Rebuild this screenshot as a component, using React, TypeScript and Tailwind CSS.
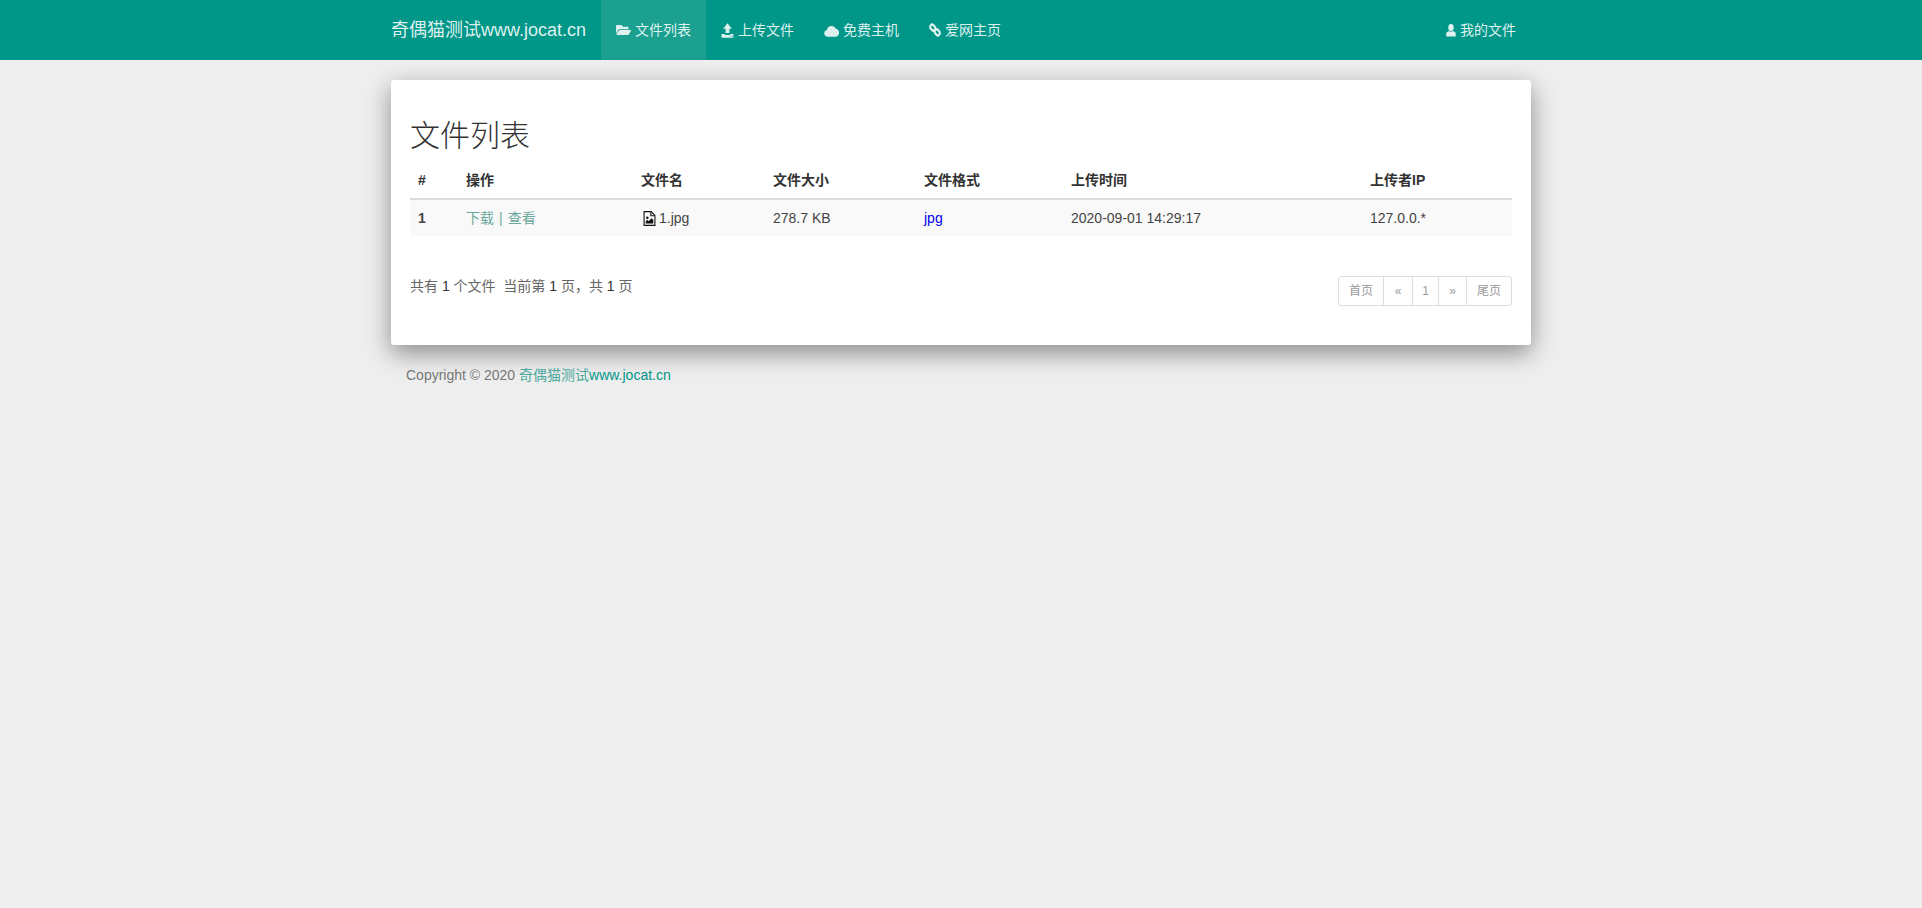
import { FaFolderOpen } from "react-icons/fa";

const font = { fontFamily: '"Liberation Sans","Noto Sans CJK SC",sans-serif' };

function UploadIcon() {
  return (
    <svg viewBox="0 0 24 24" fill="currentColor" className="h-[15px] w-[13px]" preserveAspectRatio="none">
      <path d="M12 0.5 L20 9 H15.5 V16 H8.5 V9 H4 Z" />
      <path fillRule="evenodd" d="M1 17.5 H7 V19 H17 V17.5 H23 V23.5 H1 Z M17.5 20.5 h1.5 v1.5 h-1.5 Z M20.5 20.5 h1.5 v1.5 h-1.5 Z" />
    </svg>
  );
}

function CloudIcon() {
  return (
    <svg viewBox="0 0 24 20" fill="currentColor" className="h-[13px] w-[15px]" preserveAspectRatio="none">
      <path d="M5.5 19.5a5.2 5.2 0 0 1-.9-10.3A7.6 7.6 0 0 1 19 7.4a6.1 6.1 0 0 1-.6 12.1z" />
    </svg>
  );
}

function LinkIcon() {
  return (
    <svg viewBox="0 0 24 24" fill="none" stroke="currentColor" strokeWidth="4" className="h-[14px] w-[12px]" preserveAspectRatio="none">
      <rect x="2" y="4" width="11" height="8" rx="4" transform="rotate(45 7.5 8)" />
      <rect x="11" y="12" width="11" height="8" rx="4" transform="rotate(45 16.5 16)" />
    </svg>
  );
}

function UserIcon() {
  return (
    <svg viewBox="0 0 20 24" fill="currentColor" className="h-[13px] w-[10px]" preserveAspectRatio="none">
      <ellipse cx="10" cy="6.5" rx="5.5" ry="6.5" />
      <path d="M6.5 13 C8 15 12 15 13.5 13 C17 14 19.5 15.5 19.5 18 V23 H0.5 V18 C0.5 15.5 3 14 6.5 13 Z" />
    </svg>
  );
}

function FileImageIcon() {
  return (
    <svg viewBox="0 0 24 28" className="h-[15px] w-[13px] text-[#111111]" preserveAspectRatio="none">
      <path d="M2 1.2 H15 L22 8.2 V26.8 H2 Z" fill="none" stroke="currentColor" strokeWidth="2" />
      <path d="M14.5 1.5 V8.7 H21.5" fill="none" stroke="currentColor" strokeWidth="2" />
      <circle cx="8" cy="12.5" r="2.4" fill="currentColor" />
      <path d="M5 23.5 V19.5 L8 16.5 L10.5 19 L15.5 13.5 L19 17 V23.5 Z" fill="currentColor" />
    </svg>
  );
}

function NavItem({ icon, label, active }: { icon: React.ReactNode; label: string; active?: boolean }) {
  return (
    <a className={`flex h-[60px] items-center gap-[4px] px-[15px] text-[14px] text-[#dff1ef] ${active ? "bg-[#1ba08f]" : ""}`}>
      {icon}
      <span>{label}</span>
    </a>
  );
}

const cols = [
  ["#", "w-[48px]"],
  ["操作", "w-[175px]"],
  ["文件名", "w-[132px]"],
  ["文件大小", "w-[151px]"],
  ["文件格式", "w-[147px]"],
  ["上传时间", "w-[299px]"],
  ["上传者IP", "w-[150px]"],
];

const pages = [
  ["首页", "w-[46px] rounded-l-[3px]"],
  ["«", "w-[30px] -ml-px"],
  ["1", "w-[27px] -ml-px"],
  ["»", "w-[29px] -ml-px"],
  ["尾页", "w-[46px] -ml-px rounded-r-[3px]"],
];

export default function App() {
  return (
    <div className="min-h-[908px] bg-[#eeeeee] text-[14px] leading-[20px] text-[#333333]" style={font}>
      <nav className="h-[60px] bg-[#009688]">
        <div className="mx-auto flex w-[1170px]">
          <a className="flex h-[60px] items-center px-[15px] text-[18px] text-[#dff1ef]">奇偶猫测试www.jocat.cn</a>
          <NavItem active icon={<FaFolderOpen className="h-[14px] w-[15px]" />} label="文件列表" />
          <NavItem icon={<UploadIcon />} label="上传文件" />
          <NavItem icon={<CloudIcon />} label="免费主机" />
          <NavItem icon={<LinkIcon />} label="爱网主页" />
          <div className="ml-auto mr-[15px]">
            <NavItem icon={<UserIcon />} label="我的文件" />
          </div>
        </div>
      </nav>

      <main className="mx-auto w-[1170px] px-[15px] pt-[20px]">
        <section className="rounded-[3px] bg-white p-[19px] shadow-[0_8px_25px_rgba(0,0,0,0.42)]">
          <h2 className="mt-[20px] mb-[10px] text-[30px] font-light leading-[33px] text-[#333333]">文件列表</h2>
          <table className="w-[1102px] table-fixed border-collapse">
            <thead>
              <tr className="border-b-2 border-[#dddddd]">
                {cols.map(([c, w]) => (
                  <th key={c} className={`${w} p-[8px] text-left text-[14px] font-bold text-[#333333]`}>{c}</th>
                ))}
              </tr>
            </thead>
            <tbody>
              <tr className="bg-[#f9f9f9] text-[#444444]">
                <td className="p-[8px] font-bold">1</td>
                <td className="p-[8px] text-[#6aa79b]">
                  <a>下载</a>
                  <span className="mx-[5px]">|</span>
                  <a>查看</a>
                </td>
                <td className="p-[8px]">
                  <span className="flex items-center gap-[3px] pl-[2px]">
                    <FileImageIcon />
                    <span>1.jpg</span>
                  </span>
                </td>
                <td className="p-[8px]">278.7 KB</td>
                <td className="p-[8px] text-[#0000ee]"><a>jpg</a></td>
                <td className="p-[8px]">2020-09-01 14:29:17</td>
                <td className="p-[8px]">127.0.0.*</td>
              </tr>
            </tbody>
          </table>
          <div className="mt-[20px] flex items-start justify-between py-[20px]">
            <p className="text-[#666666]">
              共有 <span className="text-[#333333]">1</span> 个文件 &nbsp;当前第 <span className="text-[#333333]">1</span> 页，共 <span className="text-[#333333]">1</span> 页
            </p>
            <ul className="flex">
              {pages.map(([p, w]) => (
                <li key={p} className={`${w} flex h-[30px] items-center justify-center border border-[#dddddd] bg-white text-[12px] leading-[18px] text-[#999999]`}>{p}</li>
              ))}
            </ul>
          </div>
        </section>
        <footer className="mt-[20px] px-[15px] text-[#777777]">
          Copyright © 2020 <a className="text-[#009688]"><span className="text-[#4aa89e]">奇偶猫测试</span>www.jocat.cn</a>
        </footer>
      </main>
    </div>
  );
}
